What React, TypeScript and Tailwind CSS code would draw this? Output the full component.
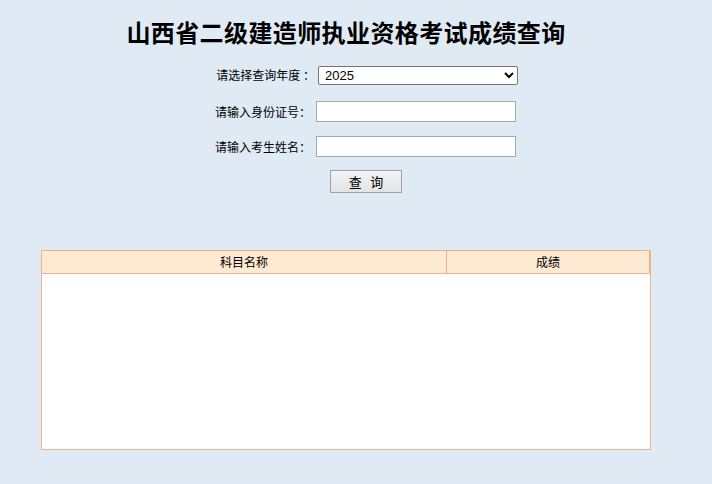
import React from 'react';

const cjk = { fontFamily: '"Noto Sans CJK SC", "Liberation Sans", sans-serif' };

export default function App() {
  return (
    <div className="min-h-[484px] w-full bg-[#dfeaf4]" style={cjk}>
      <div className="ml-[41px] w-[610px] pt-[14px]">
        <h1 className="text-center text-[24px] font-bold leading-[36px] tracking-[0.4px] text-black">
          山西省二级建造师执业资格考试成绩查询
        </h1>

        <div className="mt-[15px] flex flex-col items-start pl-[170px] text-[12px] text-black">
          <div className="flex h-[20px] items-center">
            <span className="w-[104px] whitespace-pre text-right">请选择查询年度 ：</span>
            <select
              className="ml-[3px] h-[19px] w-[200px] rounded-[2px] border border-[#767676] bg-white px-[2px] text-[13px] leading-[17px] text-black"
              style={{ fontFamily: '"Liberation Sans", Arial, sans-serif' }}
              defaultValue="2025"
            >
              <option>2025</option>
            </select>
          </div>
          <div className="mt-[16px] flex h-[21px] items-center">
            <span className="w-[104px] pr-[4px] text-right">请输入身份证号：</span>
            <input className="ml-[1px] h-[21px] w-[200px] border border-[#a6aab0] bg-white" />
          </div>
          <div className="mt-[14px] flex h-[21px] items-center">
            <span className="w-[104px] pr-[4px] text-right">请输入考生姓名：</span>
            <input className="ml-[1px] h-[21px] w-[200px] border border-[#a6aab0] bg-white" />
          </div>
          <button className="ml-[119px] mt-[13px] h-[23px] w-[72px] border border-[#a0a4a8] bg-gradient-to-b from-[#f4f4f6] to-[#e2e3e7] text-[13px] leading-[21px] text-black">
            查&nbsp;&nbsp;&nbsp;询
          </button>
        </div>

        <div className="mt-[57px] h-[200px] w-[610px] border border-[#efb28a] bg-white">
          <div className="flex h-[23px] border-b border-[#efb28a] bg-[#fee9d2] text-[12px] leading-[22px] text-black">
            <div className="w-[405px] border-r border-[#efb28a] text-center">科目名称</div>
            <div className="flex-1 border-r border-[#efb28a] text-center">成绩</div>
          </div>
        </div>
      </div>
    </div>
  );
}
